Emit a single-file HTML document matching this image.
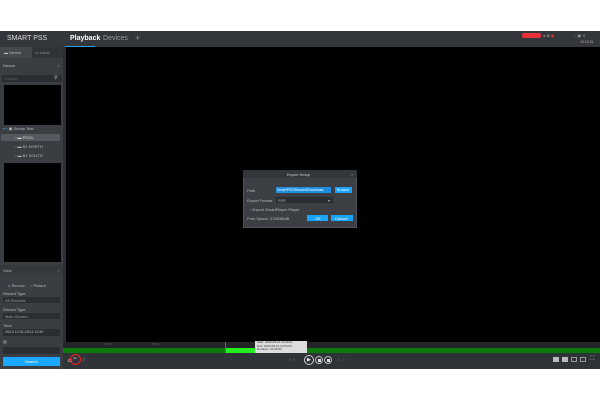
<!DOCTYPE html>
<html><head><style>
*{margin:0;padding:0;box-sizing:border-box}
body{width:600px;height:400px;background:#fff;position:relative;overflow:hidden;font-family:"Liberation Sans",sans-serif;color:#ccc}
.a{position:absolute}
.t{font-size:4px;color:#bbb;white-space:nowrap}
</style></head><body>
<div class="a" style="left:0;top:31px;width:600px;height:338px;background:#2b2e33"></div>
<!-- top bar -->
<div class="a" style="left:0;top:31px;width:600px;height:16px;background:#33363b"></div>
<div class="a" style="left:7px;top:35px;font-size:7px;color:#ddd">SMART PSS</div>
<div class="a" style="left:70px;top:35px;font-size:7px;color:#fff;font-weight:bold">Playback</div>
<div class="a" style="left:103px;top:35px;font-size:7px;color:#999">Devices</div>
<div class="a" style="left:135px;top:33px;font-size:9px;color:#888">+</div>
<div class="a" style="left:65px;top:46px;width:30px;height:1px;background:#2a9fe8"></div>
<div class="a" style="left:522px;top:33px;width:19px;height:5px;background:#e8303a;border-radius:2px"></div>
<div class="a t" style="left:543px;top:33px;color:#999">● ✿ <span style="color:#e33">◆</span></div>
<div class="a t" style="left:574px;top:33px;color:#999">– ▣ ✕</div>
<div class="a t" style="left:580px;top:40px;font-size:3.5px">10:13:21</div>
<!-- sidebar -->
<div class="a" style="left:0;top:47px;width:63px;height:322px;background:#3a3d42"></div>
<div class="a" style="left:0;top:47px;width:32px;height:11px;background:#44474c"></div>
<div class="a" style="left:32px;top:47px;width:31px;height:11px;background:#2f3237"></div>
<div class="a t" style="left:4px;top:50px">▬ Device</div>
<div class="a t" style="left:35px;top:50px;color:#999">▭ Local</div>
<div class="a t" style="left:3px;top:63px">Device</div><div class="a t" style="left:58px;top:63px">›</div>
<div class="a" style="left:2px;top:75px;width:60px;height:7px;background:#2a2d31"></div>
<div class="a t" style="left:5px;top:76px;color:#666">Search</div>
<div class="a" style="left:54px;top:75px;font-size:5px;color:#ccc">⚲</div>
<div class="a" style="left:4px;top:85px;width:57px;height:40px;background:#000"></div>
<div class="a t" style="left:3px;top:126px"><span style="color:#2a9fe8">▾</span> ▫ ▣ Sentry Test</div>
<div class="a" style="left:1px;top:134px;width:59px;height:7px;background:#55595f"></div>
<div class="a t" style="left:15px;top:135px;color:#ddd">▫ ▬ POOL</div>
<div class="a t" style="left:15px;top:144px">▫ ▬ B1 NORTH</div>
<div class="a t" style="left:15px;top:153px">▫ ▬ B1 SOUTH</div>
<div class="a" style="left:4px;top:163px;width:57px;height:99px;background:#000"></div>
<div class="a" style="left:0;top:265px;width:63px;height:10px;background:#35383d"></div>
<div class="a t" style="left:3px;top:268px">View</div><div class="a t" style="left:58px;top:268px">›</div>
<div class="a t" style="left:8px;top:283px"><span style="color:#2a9fe8">●</span> Record &nbsp;&nbsp;&nbsp; ○ Picture</div>
<div class="a t" style="left:3px;top:291px">Record Type</div>
<div class="a" style="left:3px;top:297px;width:57px;height:6px;background:#2a2d31"></div>
<div class="a t" style="left:5px;top:298px;color:#999">All Records</div>
<div class="a t" style="left:3px;top:307px">Stream Type</div>
<div class="a" style="left:3px;top:313px;width:57px;height:6px;background:#2a2d31"></div>
<div class="a t" style="left:5px;top:314px;color:#999">Main Stream</div>
<div class="a t" style="left:3px;top:323px">Time</div>
<div class="a" style="left:3px;top:329px;width:57px;height:7px;background:#2a2d31"></div>
<div class="a t" style="left:5px;top:330px;font-size:3.5px">05/14 12:00-05/14 12:59</div>
<div class="a t" style="left:3px;top:339px">▤</div>
<div class="a" style="left:3px;top:347px;width:57px;height:7px;background:#2a2d31"></div>
<div class="a" style="left:3px;top:357px;width:57px;height:9px;background:#1aa8ff"></div>
<div class="a t" style="left:25px;top:359px;color:#fff">Search</div>
<!-- video -->
<div class="a" style="left:66px;top:47px;width:534px;height:295px;background:#000"></div>
<div class="a" style="left:63px;top:342px;width:537px;height:6px;background:#222428"></div>
<div class="a t" style="left:104px;top:342px;font-size:3px;color:#666">06:00 &nbsp;&nbsp;&nbsp;&nbsp;&nbsp;&nbsp;&nbsp;&nbsp;&nbsp;&nbsp;&nbsp;&nbsp;&nbsp;&nbsp;&nbsp;&nbsp;&nbsp;&nbsp;&nbsp;&nbsp;&nbsp;&nbsp;&nbsp;&nbsp;&nbsp;&nbsp;&nbsp;&nbsp;&nbsp;&nbsp;&nbsp;&nbsp;&nbsp;&nbsp;&nbsp;&nbsp;&nbsp;&nbsp;&nbsp;&nbsp;&nbsp;&nbsp;&nbsp;&nbsp;&nbsp;&nbsp; 08:00</div>
<div class="a" style="left:63px;top:348px;width:537px;height:5px;background:#0b7a0b"></div>
<div class="a" style="left:225px;top:348px;width:30px;height:5px;background:#22ee22"></div>
<div class="a" style="left:225px;top:342px;width:1px;height:11px;background:#e33"></div>
<div class="a" style="left:255px;top:341px;width:52px;height:12px;background:#ddd"></div>
<div class="a" style="left:257px;top:341px;font-size:3px;color:#333;line-height:3.6px">Start: 2023-05-14 11:00:01<br>End: 2023-05-14 12:00:01<br>Duration: 01:00:00</div>
<!-- controls -->
<div class="a" style="left:63px;top:353px;width:537px;height:16px;background:#2f3237"></div>
<div class="a t" style="left:67px;top:357px;font-size:6px;color:#888">⏏</div>
<div class="a" style="left:70px;top:354px;width:11px;height:11px;border:1px solid #e22;border-radius:50%"></div>
<div class="a t" style="left:73px;top:356px;font-size:5px;color:#ccc">✂</div>
<div class="a t" style="left:82px;top:357px;font-size:5px;color:#888">▯</div>
<div class="a t" style="left:289px;top:357px;font-size:4px;color:#666">⟠ ⊖</div>
<div class="a" style="left:304px;top:355px;width:10px;height:10px;border:1px solid #ccc;border-radius:50%"></div>
<div class="a" style="left:315px;top:356px;width:8px;height:8px;border:1px solid #bbb;border-radius:50%"></div>
<div class="a" style="left:324px;top:356px;width:8px;height:8px;border:1px solid #bbb;border-radius:50%"></div>
<div class="a t" style="left:307px;top:357px;font-size:5px;color:#eee">▶</div>
<div class="a" style="left:318px;top:359px;width:3px;height:3px;background:#ddd"></div>
<div class="a" style="left:327px;top:359px;width:3px;height:3px;background:#ddd"></div>
<div class="a t" style="left:337px;top:357px;font-size:4px;color:#555">⊕ ⊙</div>
<div class="a" style="left:553px;top:357px;width:6px;height:5px;background:#bbb"></div>
<div class="a" style="left:562px;top:357px;width:6px;height:5px;background:#bbb"></div>
<div class="a" style="left:571px;top:357px;width:6px;height:5px;border:1px solid #999"></div>
<div class="a" style="left:580px;top:357px;width:6px;height:5px;border:1px solid #999"></div>
<div class="a t" style="left:590px;top:356px;font-size:6px;color:#aaa">⛶</div>
<!-- dialog -->
<div class="a" style="left:243px;top:170px;width:114px;height:58px;background:#3b3e43;border:1px solid #50545a"></div>
<div class="a" style="left:243px;top:170px;width:114px;height:8px;background:#33363b"></div>
<div class="a t" style="left:287px;top:172px;color:#ccc">Export Setup</div>
<div class="a t" style="left:351px;top:172px;color:#999">×</div>
<div class="a t" style="left:247px;top:188px">Path</div>
<div class="a" style="left:276px;top:187px;width:55px;height:6px;background:#1c8fe0"></div>
<div class="a t" style="left:277px;top:188px;color:#fff;font-size:3.6px">SmartPSS\Record\Download</div>
<div class="a" style="left:335px;top:187px;width:17px;height:6px;background:#1aa3ff"></div>
<div class="a t" style="left:337px;top:188px;color:#fff;font-size:3.6px">Browse</div>
<div class="a t" style="left:247px;top:198px">Export Format</div>
<div class="a" style="left:276px;top:197px;width:57px;height:6px;background:#2a2d31"></div>
<div class="a t" style="left:278px;top:198px;color:#aaa">RSP</div><div class="a t" style="left:328px;top:198px">▾</div>
<div class="a t" style="left:250px;top:207px">▫ Export SmartPlayer Player</div>
<div class="a t" style="left:247px;top:216px">Free Space: 278838MB</div>
<div class="a" style="left:307px;top:215px;width:21px;height:6px;background:#1aa3ff"></div>
<div class="a t" style="left:315px;top:216px;color:#fff">OK</div>
<div class="a" style="left:331px;top:215px;width:22px;height:6px;background:#1aa3ff"></div>
<div class="a t" style="left:335px;top:216px;color:#fff">Cancel</div>
</body></html>
